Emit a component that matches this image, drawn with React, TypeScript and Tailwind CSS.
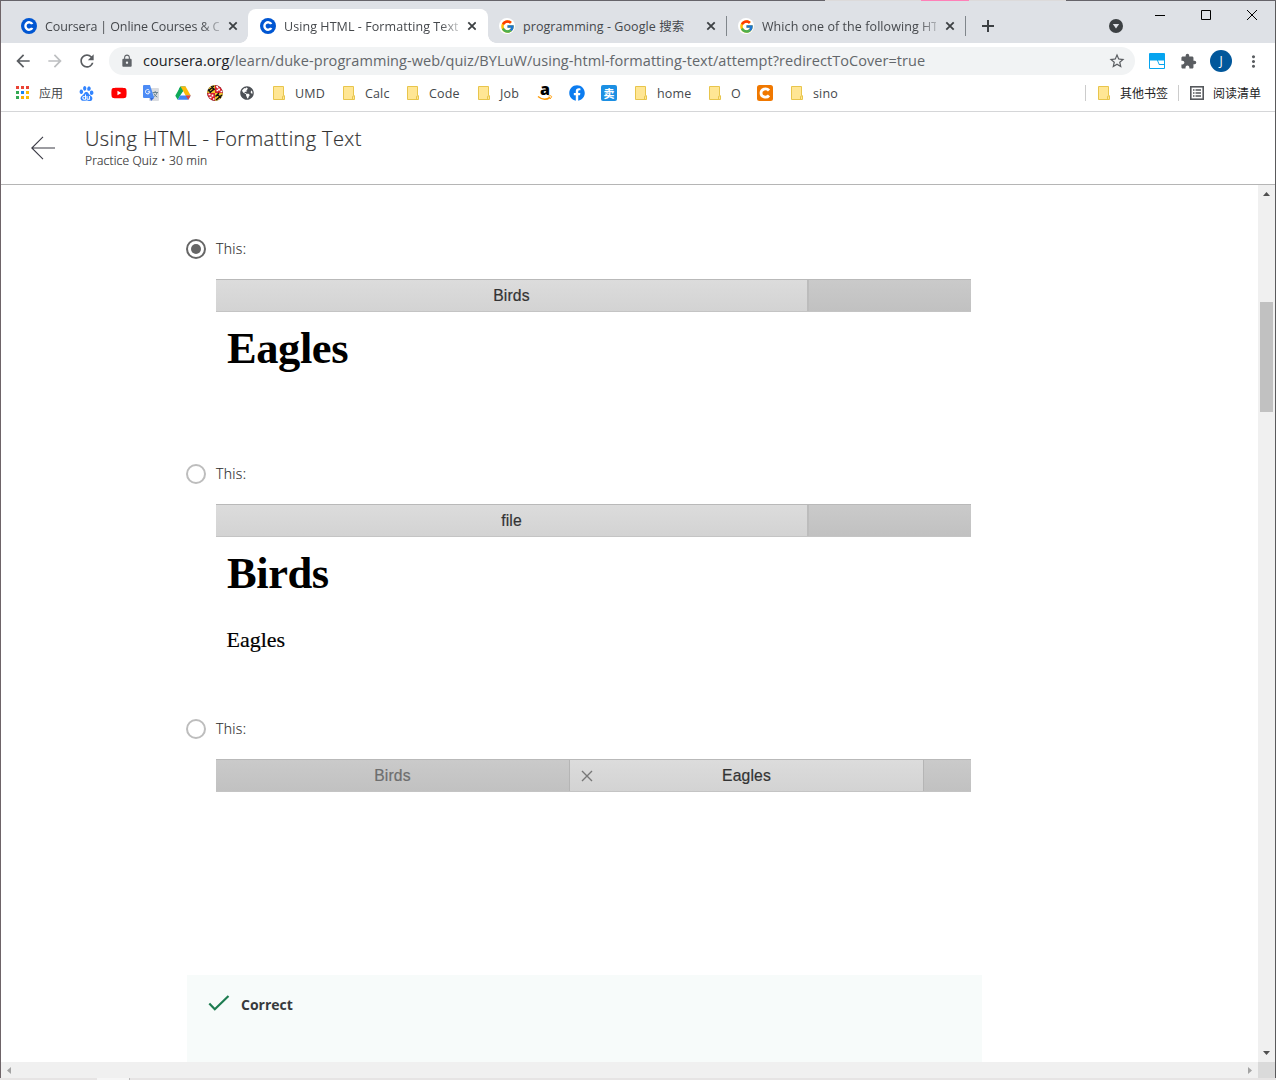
import React from "react";
import { FcGoogle } from "react-icons/fc";
import { FaFacebook, FaYoutube, FaGlobeAmericas } from "react-icons/fa";
import { SiBaidu } from "react-icons/si";
import {
  MdArrowBack,
  MdArrowForward,
  MdRefresh,
  MdLock,
  MdStarBorder,
  MdExtension,
  MdMoreVert,
} from "react-icons/md";

const UI = "font-['Open_Sans','Noto_Sans_CJK_SC',sans-serif]";

function CourseraIcon() {
  return (
    <svg width="16" height="16" viewBox="0 0 16 16" className="block shrink-0">
      <circle cx="8" cy="8" r="8" fill="#0056d2" />
      <path d="M11.300 9.900A3.700 3.700 0 1 1 11.300 6.100" fill="none" stroke="#fff" strokeWidth="2.400" />
      <path d="M9.200 7.100l2-.9v3.600l-2-.9z" fill="#0056d2" />
    </svg>
  );
}

function GoogleIcon() {
  return (
    <span className="flex size-4 shrink-0 items-center justify-center rounded-full bg-white">
      <FcGoogle size={15} />
    </span>
  );
}

function Folder() {
  return (
    <svg width="12" height="14" viewBox="0 0 12 14" className="block shrink-0">
      <path d="M.5.5h10v9.2h1v3.8H.5z" fill="#ffe694" stroke="#e8c54c" />
      <path d="M9.5 13.5V10.3h1" fill="none" stroke="#e8c54c" />
    </svg>
  );
}

function AppsIcon() {
  const colors = ["#ea4335", "#ea4335", "#ea4335", "#34a853", "#1a84f0", "#fbbc04", "#34a853", "#fbb004", "#fbbc04"];
  return (
    <span className="mb-px grid w-[13px] shrink-0 grid-cols-[3px_3px_3px] gap-[2px]">
      {colors.map((c, i) => (
        <span key={i} className="size-[3px]" style={{ background: c }} />
      ))}
    </span>
  );
}

function Translate() {
  return (
    <svg width="16" height="16" viewBox="0 0 16 16" className="block">
      <rect x="6" y="3" width="10" height="13" rx="1" fill="#dadce0" />
      <path d="M9.500 7.500h5.500M12.200 6v1.500M14 7.500c-.5 2.300-2 3.700-3.800 4.600M10.800 8.500c.7 1.600 2 2.900 3.500 3.600" stroke="#607d8b" strokeWidth="0.9" fill="none" />
      <path d="M8 16l3-3H7z" fill="#3367d6" />
      <path d="M1 0h6l4.200 13H1a1 1 0 0 1-1-1V1a1 1 0 0 1 1-1z" fill="#4c8bf5" />
      <path d="M6.300 5.200A2.200 2.200 0 1 0 6.900 6.800H4.800" fill="none" stroke="#fff" strokeWidth="1" />
    </svg>
  );
}

function Drive() {
  return (
    <svg width="16" height="16" viewBox="0 0 16 16" className="block">
      <path d="M5.400 1.500H10.600L8 6z" fill="#188038" />
      <path d="M5.400 1.500L8 6 2.700 14.800.3 10.700z" fill="#0fa958" />
      <path d="M10.600 1.500L15.700 10.400H10.600L6.900 4.100 5.400 1.500z" fill="#fcbb08" />
      <path d="M5.400 1.500L8 6 6.600 8.300 3.900 4z" fill="#0fa958" />
      <path d="M5.200 10.400H15.700L13.300 14.800H2.700z" fill="#4285f4" />
      <path d="M10.600 10.400h5.100l-2.400 4.400z" fill="#ea4335" />
    </svg>
  );
}

function Maryland() {
  return (
    <svg width="16" height="16" viewBox="0 0 16 16" className="block">
      <defs>
        <clipPath id="md-ball">
          <circle cx="8" cy="8" r="7.800" />
        </clipPath>
      </defs>
      <g clipPath="url(#md-ball)">
        <rect width="16" height="16" fill="#111" />
        <path d="M0 0h8v8H0z" fill="#f4c32c" />
        <path d="M8 8h8v8H8z" fill="#f4c32c" />
        <path d="M8 0h8v8H8zM0 8h8v8H0z" fill="#d81e2c" />
        <path d="M1 6l6-5M2.500 8l5-4.500M0 3.500L3.500 7M4 1l3.500 4M9 15l6-5M8.500 11.500L12 8M10 9l4 4" stroke="#111" strokeWidth="1.500" />
        <path d="M9.500 1l1.500 2M12.500 3.500l-1 2M9.500 5.500h1.500M13.500 6.500h2M1.500 9.500h2M5.500 9.500v2M2.500 12.500h2M6 14h1.500" stroke="#fff" strokeWidth="1.700" />
      </g>
    </svg>
  );
}

function Amazon() {
  return (
    <span className="relative block size-4 overflow-visible">
      <span className="absolute top-[-5px] left-[3px] font-['Open_Sans',sans-serif] text-[16px] leading-[18px] font-extrabold text-black">a</span>
      <svg width="16" height="16" viewBox="0 0 16 16" className="absolute inset-0">
        <path d="M1 11.500c4 3.200 8.600 3.200 12 1" fill="none" stroke="#ff9900" strokeWidth="1.500" />
        <path d="M11.500 11c2-.5 3.300-.2 3 .600s-.6 1.700-1.300 2.300" fill="none" stroke="#ff9900" strokeWidth="1" />
      </svg>
    </span>
  );
}

function BaiduIcon() {
  return (
    <span className="block text-[#3385ff]">
      <SiBaidu size={15} />
    </span>
  );
}

function ReadingList() {
  return (
    <svg width="14" height="14" viewBox="0 0 14 14" className="block">
      <rect x="0.800" y="0.800" width="12.400" height="12.400" fill="none" stroke="#55585c" strokeWidth="1.600" />
      <path d="M3 4h1.500M3 7h1.500M3 10h1.500M5.500 4H11M5.500 7H11M5.500 10H11" stroke="#55585c" strokeWidth="1.400" />
    </svg>
  );
}

function SquareIcon({ kind }: { kind: "sell" | "c" }) {
  if (kind === "sell")
    return (
      <span className={`flex size-4 items-center justify-center rounded-[2px] bg-[#1c8fe3] text-[11px] leading-none font-bold text-white ${UI}`}>卖</span>
    );
  return (
    <svg width="16" height="16" viewBox="0 0 16 16" className="block">
      <rect width="16" height="16" rx="2.500" fill="#f07800" />
      <path d="M12 5.500C9.500 2.500 4 3.800 4 8s5.500 5.500 8 2.500" fill="none" stroke="#fff" strokeWidth="2.800" />
    </svg>
  );
}

const bookmarks: { w: number; icon: React.ReactNode; label?: string }[] = [
  { w: 63, icon: <AppsIcon />, label: "应用" },
  { w: 32, icon: <BaiduIcon /> },
  { w: 32, icon: <FaYoutube size={16} color="#f00" /> },
  { w: 32, icon: <Translate /> },
  { w: 32, icon: <Drive /> },
  { w: 33, icon: <Maryland /> },
  { w: 33, icon: <FaGlobeAmericas size={14} color="#4d5156" /> },
  { w: 70, icon: <Folder />, label: "UMD" },
  { w: 64, icon: <Folder />, label: "Calc" },
  { w: 71, icon: <Folder />, label: "Code" },
  { w: 59, icon: <Folder />, label: "Job" },
  { w: 32, icon: <Amazon /> },
  { w: 32, icon: <FaFacebook size={16} color="#0b7cf0" /> },
  { w: 34, icon: <SquareIcon kind="sell" /> },
  { w: 74, icon: <Folder />, label: "home" },
  { w: 48, icon: <Folder />, label: "O" },
  { w: 34, icon: <SquareIcon kind="c" /> },
  { w: 60, icon: <Folder />, label: "sino" },
];

function CloseX() {
  return (
    <svg width="16" height="16" viewBox="0 0 16 16" className="ml-[6px] block shrink-0">
      <path d="M4.300 4.300l7.400 7.400M11.700 4.300l-7.400 7.400" stroke="#3c4043" strokeWidth="1.800" />
    </svg>
  );
}

function Tab({
  icon,
  title,
  active,
  divider,
  fade,
  tight,
}: {
  icon: React.ReactNode;
  title: string;
  active?: boolean;
  divider?: boolean;
  fade?: boolean;
  tight?: boolean;
}) {
  return (
    <div className={`relative flex h-[34px] w-[239px] shrink-0 items-center pl-3 ${active ? "rounded-t-lg bg-white" : ""}`}>
      {active && (
        <>
          <span className="absolute top-0 -right-px h-[34px] w-3 rounded-tr-lg bg-white" />
          <span className="absolute bottom-0 -left-2 size-2 bg-[radial-gradient(circle_at_0_0,transparent_7.5px,#fff_8px)]" />
          <span className="absolute -right-[9px] bottom-0 size-2 bg-[radial-gradient(circle_at_100%_0,transparent_7.5px,#fff_8px)]" />
        </>
      )}
      {icon}
      <span
        className={`mt-[2px] ml-2 w-[174px] shrink-0 text-[12.5px] leading-[18px] whitespace-nowrap text-[#45484c] ${
          tight ? "tracking-[-0.12px]" : "tracking-[0.07px]"
        } ${UI} ${fade ? "[mask-image:linear-gradient(to_right,#000_156px,transparent_182px)]" : ""}`}
      >
        {title}
      </span>
      <CloseX />
      {divider && <span className="absolute top-[7px] -right-px h-5 w-px bg-[#80868b]" />}
    </div>
  );
}

function Radio({ checked }: { checked?: boolean }) {
  return (
    <span className={`flex size-5 items-center justify-center rounded-full border-2 ${checked ? "border-[#666]" : "border-[#bdbdbd]"}`}>
      {checked && <span className="size-[10px] rounded-full bg-[#666]" />}
    </span>
  );
}

function Option({ checked, className, children }: { checked?: boolean; className: string; children: React.ReactNode }) {
  return (
    <div className={`flex flex-col ${className}`}>
      <div className="flex h-5 items-center gap-[10px]">
        <Radio checked={checked} />
        <span className="font-['Open_Sans',sans-serif] text-[14px] leading-5 font-light tracking-[0.35px] text-[#333] [-webkit-text-stroke:0.2px_#333]">This:</span>
      </div>
      <div className="mt-5 ml-[30px] w-[755px]">{children}</div>
    </div>
  );
}

const LIGHT = "bg-linear-to-b from-[#dcdcdc] to-[#d3d3d3]";
const DARK = "bg-linear-to-b from-[#cacaca] to-[#c1c1c1]";
const TAB_TEXT = "text-[#333] [-webkit-text-stroke:0.2px_#333]";

function Strip({ children }: { children: React.ReactNode }) {
  return (
    <div className="flex h-[33px] border-t border-b border-t-[#b9b9b9] border-b-[#c4c4c4] font-['Liberation_Sans',sans-serif] text-[15.700px] leading-[32px] tracking-[0.15px]">
      {children}
    </div>
  );
}

export default function App() {
  return (
    <div className="flex h-[1080px] w-[1276px] flex-col overflow-hidden bg-white">
      <div className="flex h-px shrink-0 bg-[#66646a]">
        <span className="ml-[825px] w-24 bg-[#dcdada]" />
        <span className="w-12 bg-[#ff80b8]" />
        <span className="w-[97px] bg-[#dcdada]" />
      </div>
      <div className="flex min-h-0 flex-1 flex-col border-r border-l border-r-[#5a5a5c] border-l-[#6e6468]">
        <div className="flex h-[42px] shrink-0 items-end bg-[#dee1e6] pl-2">
          <Tab icon={<CourseraIcon />} title="Coursera | Online Courses & C" fade tight />
          <Tab icon={<CourseraIcon />} title="Using HTML - Formatting Text" active fade />
          <Tab icon={<GoogleIcon />} title="programming - Google 搜索" divider />
          <Tab icon={<GoogleIcon />} title="Which one of the following HT" divider fade />
          <svg width="14" height="14" viewBox="0 0 14 14" className="mb-[10px] ml-[16px]">
            <path d="M7 1v12M1 7h12" stroke="#3c4043" strokeWidth="2" />
          </svg>
          <svg width="14" height="14" viewBox="0 0 14 14" className="mb-[10px] ml-[114px]">
            <circle cx="7" cy="7" r="7" fill="#3c4043" />
            <path d="M3.800 5h6.400L7 9.500z" fill="#dee1e6" />
          </svg>
          <svg width="102" height="12" viewBox="0 0 102 12" className="mb-[22px] ml-[32px]">
            <path d="M0 6.500h10M46.500 1.500h9v9h-9zM92 1l10 10M102 1l-10 10" fill="none" stroke="#000" />
          </svg>
        </div>

        <div className="flex h-9 shrink-0 items-center pl-[12px]">
          <MdArrowBack size={20} color="#5a5d61" />
          <MdArrowForward size={20} color="#bdbfc1" className="ml-3" />
          <MdRefresh size={20} color="#5a5d61" className="ml-3" />
          <div className="ml-[12px] flex h-7 w-[1026px] items-center rounded-full bg-[#f1f3f4] pl-[11px]">
            <MdLock size={14} color="#5f6368" />
            <span className={`ml-[9px] w-[965px] text-[14.500px] leading-7 tracking-[0.056px] whitespace-nowrap text-[#63676b] ${UI}`}>
              <span className="text-[#202124]">coursera.org</span>/learn/duke-programming-web/quiz/BYLuW/using-html-formatting-text/attempt?redirectToCover=true
            </span>
            <MdStarBorder size={18} color="#5a5d61" />
          </div>
          <svg width="16" height="16" viewBox="0 0 16 16" className="ml-[14px]">
            <rect width="16" height="16" rx="1" fill="#05a4ef" />
            <path d="M1 7.500h7l2 4.500h5v3H1z" fill="#fff" />
            <path d="M9 7.500h6v3.500h-4.500z" fill="#fff" />
          </svg>
          <MdExtension size={17} color="#5a5d61" className="ml-[15px]" />
          <span className={`ml-[13px] flex size-[22px] items-center justify-center rounded-full bg-[#01579b] text-[12px] text-white ${UI}`}>J</span>
          <MdMoreVert size={19} color="#5a5d61" className="ml-[12px]" />
        </div>

        <div className={`flex h-[33px] shrink-0 items-center border-b border-[#d5d6d8] pb-[4px] pl-[15px] text-[12.500px] text-[#45484c] ${UI}`}>
          {bookmarks.map((b, i) => (
            <div key={i} className="flex shrink-0 items-center gap-[10px]" style={{ width: b.w }}>
              {b.icon}
              {b.label && (
                <span className={`mt-[2px] leading-4 whitespace-nowrap ${i === 0 ? "text-[12px]" : "tracking-[0.15px]"}`}>{b.label}</span>
              )}
            </div>
          ))}
          <div className="ml-auto flex items-center pr-[14px] text-[12px] text-[#222]">
            <span className="mr-3 h-4 w-px bg-[#ccc]" />
            <Folder />
            <span className="mt-[2px] mr-[10px] ml-[10px] leading-4">其他书签</span>
            <span className="mr-[11px] h-4 w-px bg-[#ccc]" />
            <ReadingList />
            <span className="mt-[2px] ml-[9px] leading-4">阅读清单</span>
          </div>
        </div>

        <header className="flex h-[73px] shrink-0 items-center border-b border-[#b5b5b5] pl-[30px]">
          <svg width="24" height="24" viewBox="0 0 24 24" className="block">
            <path d="M24 12H.8M12 .8L.8 12 12 23.200" fill="none" stroke="#3a3a45" strokeWidth="1.100" />
          </svg>
          <div className="ml-[30px] flex flex-col font-['Open_Sans',sans-serif] text-[#333] [-webkit-text-stroke:0.2px_#333]">
            <h1 className="text-[20px] leading-6 font-light tracking-[0.38px]">Using HTML - Formatting Text</h1>
            <p className="mt-px -mb-px text-[12px] leading-[18px] font-light tracking-[0.18px]">Practice Quiz • 30 min</p>
          </div>
        </header>

        <div className="flex min-h-0 flex-1">
          <main className="flex min-w-0 flex-1 flex-col overflow-hidden pt-[54px] pl-[185px]">
            <Option checked className="h-[225px] shrink-0">
              <Strip>
                <div className={`w-[591px] text-center ${TAB_TEXT} ${LIGHT}`}>Birds</div>
                <div className={`flex-1 border-l-2 border-[#bcbcbc] ${DARK}`} />
              </Strip>
              <h2 className="mt-[11px] ml-[11px] font-['Liberation_Serif',serif] text-[44.500px] leading-[50px] font-bold tracking-[-0.430px] text-black">Eagles</h2>
            </Option>
            <Option className="h-[255px] shrink-0">
              <Strip>
                <div className={`w-[591px] text-center ${TAB_TEXT} ${LIGHT}`}>file</div>
                <div className={`flex-1 border-l-2 border-[#bcbcbc] ${DARK}`} />
              </Strip>
              <h2 className="mt-[11px] ml-[11px] font-['Liberation_Serif',serif] text-[44.500px] leading-[50px] font-bold tracking-[-0.430px] text-black">Birds</h2>
              <p className="mt-[29px] ml-[10.500px] font-['Liberation_Serif',serif] text-[22px] leading-[26px] text-black [-webkit-text-stroke:0.2px_#000]">Eagles</p>
            </Option>
            <Option className="h-[256px] shrink-0">
              <Strip>
                <div className={`w-[353px] text-center text-[#6e6e6e] [-webkit-text-stroke:0.2px_#6e6e6e] ${DARK}`}>Birds</div>
                <div className={`relative w-[354px] border-l border-[#b5b5b5] text-center ${TAB_TEXT} ${LIGHT}`}>
                  <svg width="12" height="12" viewBox="0 0 12 12" className="absolute top-[10px] left-[11px]">
                    <path d="M1 1l10 10M11 1L1 11" stroke="#777" strokeWidth="1.400" />
                  </svg>
                  Eagles
                </div>
                <div className={`flex-1 border-l border-[#b5b5b5] ${DARK}`} />
              </Strip>
            </Option>
            <div className="ml-px flex h-[87px] w-[795px] shrink-0 gap-[11px] bg-[#f7fbfa] pt-[18px] pl-[21px]">
              <svg width="22" height="18" viewBox="0 0 22 18" className="mt-px block">
                <path d="M1.300 9.500l5.500 5.700L20.500 2" fill="none" stroke="#1d7c50" strokeWidth="2.200" />
              </svg>
              <span className="font-['Open_Sans',sans-serif] text-[14px] leading-6 font-bold text-[#373a3c]">Correct</span>
            </div>
          </main>
          <div className="flex w-[17px] flex-col items-center bg-[#f0f0f0] pt-[7px] pb-[7px]">
            <svg width="7" height="4" viewBox="0 0 7 4" className="block"><path d="M0 4L3.500 0 7 4z" fill="#505050" /></svg>
            <div className="mt-[106px] h-[110px] w-[13px] bg-[#c1c1c1]" />
            <svg width="7" height="4" viewBox="0 0 7 4" className="mt-auto block"><path d="M0 0h7L3.500 4z" fill="#505050" /></svg>
          </div>
        </div>

        <div className="flex h-4 shrink-0 items-center bg-[#f0f0f0] pl-[6px]">
          <svg width="4" height="7" viewBox="0 0 4 7"><path d="M4 0v7L0 3.500z" fill="#a3a3a3" /></svg>
          <svg width="4" height="7" viewBox="0 0 4 7" className="mr-[6px] ml-auto"><path d="M0 0v7l4-3.500z" fill="#a3a3a3" /></svg>
          <span className="h-4 w-[17px] bg-[#dadada]" />
        </div>
      </div>
      <div className="flex h-[2px] shrink-0 bg-[#e6e4e4]">
        <span className="ml-[97px] w-8 bg-[#f6f6f6]" />
        <span className="w-px bg-[#bbb]" />
      </div>
    </div>
  );
}
